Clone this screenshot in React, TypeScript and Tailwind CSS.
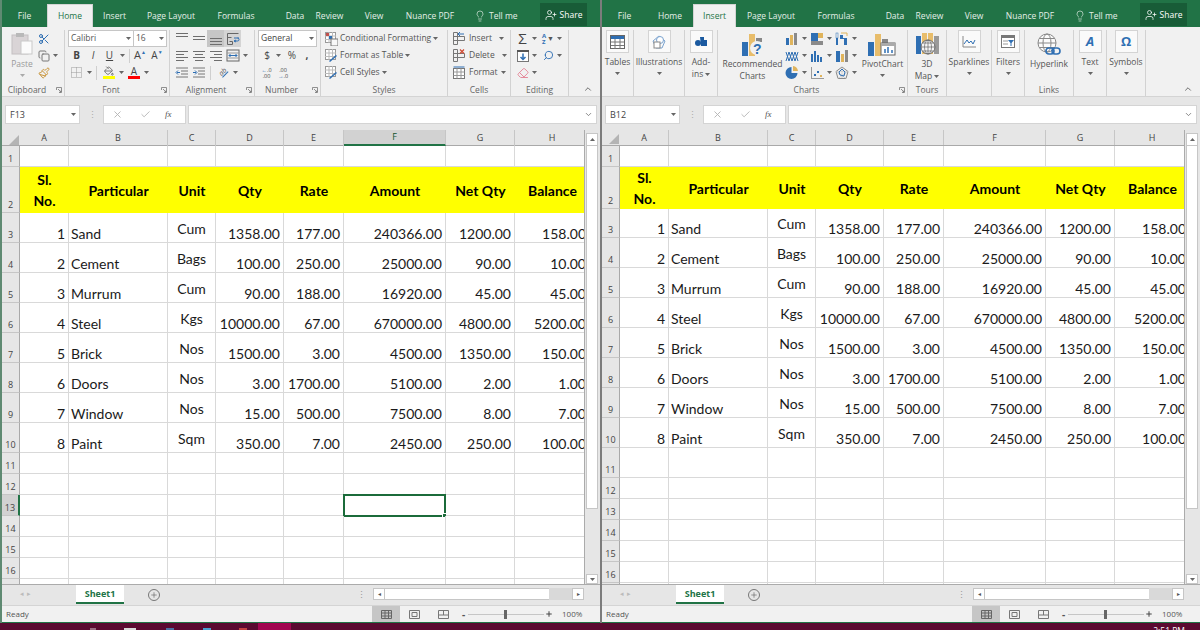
import { Copy, Eraser, PaintBucket, Paintbrush, Scissors, Search, ChevronUp, ChevronDown, Lightbulb, UserPlus, Plus, X, Check } from 'lucide-react';
import type { ReactNode } from 'react';

const COLS = 'grid-cols-[18px_49px_99px_48px_68px_60px_102px_69px_75px]';
const LETTERS = ['A', 'B', 'C', 'D', 'E', 'F', 'G', 'H'];
const HEADINGS = ['Particular', 'Unit', 'Qty', 'Rate', 'Amount', 'Net Qty', 'Balance'];
const ROWS = [
  ['1', 'Sand', 'Cum', '1358.00', '177.00', '240366.00', '1200.00', '158.00'],
  ['2', 'Cement', 'Bags', '100.00', '250.00', '25000.00', '90.00', '10.00'],
  ['3', 'Murrum', 'Cum', '90.00', '188.00', '16920.00', '45.00', '45.00'],
  ['4', 'Steel', 'Kgs', '10000.00', '67.00', '670000.00', '4800.00', '5200.00'],
  ['5', 'Brick', 'Nos', '1500.00', '3.00', '4500.00', '1350.00', '150.00'],
  ['6', 'Doors', 'Nos', '3.00', '1700.00', '5100.00', '2.00', '1.00'],
  ['7', 'Window', 'Nos', '15.00', '500.00', '7500.00', '8.00', '7.00'],
  ['8', 'Paint', 'Sqm', '350.00', '7.00', '2450.00', '250.00', '100.00'],
];

function Chev() {
  return (
    <svg width="5" height="3" viewBox="0 0 5 3" className="shrink-0">
      <path d="M0 0h5L2.5 3z" fill="#666" />
    </svg>
  );
}

function Launcher() {
  return (
    <svg width="6" height="6" viewBox="0 0 6 6" className="absolute right-[2px] top-[3px]">
      <path d="M.5 3V.5H5.500V5.500H3M2 2l3 3M3.500 5H5V3.500" fill="none" stroke="#777" strokeWidth="0.8" />
    </svg>
  );
}

function Group({ w, label, launcher, children }: { w: string; label?: string; launcher?: boolean; children: ReactNode }) {
  return (
    <div className={`${w} shrink-0 flex flex-col border-r border-[#d2d2d2]`}>
      <div className="h-[54px]">{children}</div>
      <div className={`relative h-[12px] leading-[12px] text-center text-[#666] ${launcher ? 'pr-[12px]' : ''}`}>
        {label}
        {launcher && <Launcher />}
      </div>
    </div>
  );
}

function Row({ className = '', children }: { className?: string; children: ReactNode }) {
  return <div className={`flex items-center h-[17px] ${className}`}>{children}</div>;
}

function Slot({ w, children, className = '' }: { w: string; children?: ReactNode; className?: string }) {
  return <div className={`${w} shrink-0 flex items-center justify-center ${className}`}>{children}</div>;
}

function Sep() {
  return <div className="w-px h-[14px] bg-[#cfcfcf]" />;
}

function Lines({ type }: { type: string }) {
  const sets: Record<string, number[][]> = {
    top: [[1, 2, 12], [1, 5, 12]],
    mid: [[1, 5, 12], [1, 8, 12]],
    bot: [[1, 7, 12], [1, 10, 12], [1, 13, 12]],
    left: [[1, 3, 12], [1, 6, 8], [1, 9, 12], [1, 12, 8]],
    center: [[1, 3, 12], [3, 6, 8], [1, 9, 12], [3, 12, 8]],
    right: [[1, 3, 12], [5, 6, 8], [1, 9, 12], [5, 12, 8]],
  };
  return (
    <svg width="14" height="15" viewBox="0 0 14 15">
      {sets[type].map((l, i) => (
        <rect key={i} x={l[0]} y={l[1]} width={l[2]} height="1" fill="#6e6e6e" />
      ))}
    </svg>
  );
}

function PasteIcon() {
  return (
    <svg width="22" height="23" viewBox="0 0 22 23">
      <rect x="1" y="3" width="16" height="19" fill="#d9d4d6" stroke="#c4c0c2" />
      <rect x="5" y="1" width="8" height="4" fill="#b9b9b9" />
      <rect x="10" y="9" width="11" height="13" fill="#fbfbfb" stroke="#c9c9c9" />
    </svg>
  );
}

function WrapIcon() {
  return (
    <svg width="14" height="14" viewBox="0 0 14 14">
      <path d="M1.500 1.500h11M1.500 1.500v11h5v-3h-3M1.500 5.500h4" fill="none" stroke="#666" />
      <path d="M8 6h5M8 9h3.500a1 1 0 0 0 0-3M10 8l-2 1 2 1" fill="none" stroke="#2f6fb3" />
    </svg>
  );
}

function MergeIcon() {
  return (
    <svg width="14" height="13" viewBox="0 0 14 13">
      <rect x="1" y="1" width="12" height="11" fill="none" stroke="#666" />
      <path d="M1 4h12M1 9h12" stroke="#999" />
      <path d="M3 6.500h8M4.500 5 3 6.500 4.500 8M9.500 5 11 6.500 9.500 8" fill="none" stroke="#2f6fb3" />
    </svg>
  );
}

function Indent({ flip }: { flip?: boolean }) {
  return (
    <svg width="14" height="12" viewBox="0 0 14 12">
      <path d="M1 1h12M6 4h7M6 7h7M1 10h12" stroke="#777" />
      <path d={flip ? 'M1 5.500h3M3 3.500l2 2-2 2' : 'M5 5.500H2M3 3.500l-2 2 2 2'} fill="none" stroke="#2f6fb3" />
    </svg>
  );
}

function StyleIcon({ kind }: { kind: number }) {
  return (
    <svg width="13" height="14" viewBox="0 0 13 14">
      <rect x="0.500" y="0.500" width="10" height="10" fill="#fff" stroke="#999" />
      <path d="M0 4h11M0 7.500h11M4 0v11M7.500 0v11" stroke="#bbb" />
      {kind === 0 && <rect x="1" y="1" width="3" height="3" fill="#c0504d" />}
      {kind === 0 && <rect x="4" y="4" width="3" height="3" fill="#2f6fb3" />}
      {kind === 0 && <rect x="6" y="7" width="7" height="7" fill="#f8f8f8" stroke="#777" />}
      {kind > 0 && <path d="M5 13l7-6-1-1-7 6z" fill="#2f6fb3" />}
    </svg>
  );
}

function CellIcon({ kind }: { kind: number }) {
  return (
    <svg width="13" height="13" viewBox="0 0 13 13">
      {kind < 2 ? (
        <>
          <path d="M.500.500h4v12h-4zM.500 4.500h4M.500 8.500h4M4.500 4.500h7v4h-7" fill="none" stroke="#777" />
          {kind === 0 ? <path d="M11 2H5M7 0 5 2l2 2" fill="none" stroke="#2f6fb3" /> : <path d="M7 .500l4 4M11 .500l-4 4" stroke="#d04a32" strokeWidth="1.200" />}
        </>
      ) : (
        <>
          <rect x="0.500" y="2.500" width="11" height="10" fill="#fff" stroke="#777" />
          <rect x="0.500" y="0.500" width="11" height="1" fill="#2f6fb3" />
          <path d="M4 2.500v10M8 2.500v10M.500 6h11M.500 9.500h11" stroke="#999" />
        </>
      )}
    </svg>
  );
}

function HomeRibbon() {
  return (
    <>
      <Group w="w-[63px]" label="Clipboard" launcher>
        <div className="flex">
          <div className="w-[35px] flex flex-col items-center text-[#9a9a9a] pl-[5px]">
            <div className="mt-[2px]"><PasteIcon /></div>
            <div className="leading-[11px] mt-[3px]">Paste</div>
            <div className="mt-[5px] opacity-50"><Chev /></div>
          </div>
          <div className="flex flex-col pl-[1px]">
            <Row><Scissors size={12} color="#2f6fb3" /></Row>
            <Row className="gap-[3px]"><Copy size={12} color="#777" /><Chev /></Row>
            <Row><Paintbrush size={12} color="#c9953a" /></Row>
          </div>
        </div>
      </Group>
      <Group w="w-[105px]" label="Font" launcher>
        <div className="pl-[3px]">
          <Row>
            <div className="w-[66px] h-[17px] bg-white border border-[#c6c6c6] flex items-center justify-between px-[2px]">Calibri<Chev /></div>
            <div className="w-[33px] h-[17px] bg-white border border-l-0 border-[#c6c6c6] flex items-center justify-between px-[2px]">16<Chev /></div>
          </Row>
          <Row className="text-[10px] text-[#444]">
            <Slot w="w-[17px]" className="font-bold">B</Slot>
            <Slot w="w-[16px]" className="italic">I</Slot>
            <Slot w="w-[17px]" className="underline">U</Slot>
            <Slot w="w-[9px]"><Chev /></Slot>
            <Slot w="w-[4px]"><Sep /></Slot>
            <Slot w="w-[18px]" className="text-[11px]">A<span className="text-[#2f6fb3] text-[5px] -mt-[6px]">▲</span></Slot>
            <Slot w="w-[16px]">A<span className="text-[#2f6fb3] text-[5px] -mt-[6px]">▼</span></Slot>
          </Row>
          <Row>
            <Slot w="w-[17px]">
              <svg width="11" height="11" viewBox="0 0 11 11"><path d="M.500.500h10v10H.500zM5.500.500v10M.500 5.500h10" fill="none" stroke="#999" strokeDasharray="1 1" /></svg>
            </Slot>
            <Slot w="w-[8px]"><Chev /></Slot>
            <Slot w="w-[7px]"><Sep /></Slot>
            <Slot w="w-[18px]" className="flex-col">
              <PaintBucket size={10} color="#666" />
              <div className="w-[12px] h-[3px] bg-[#ffff00]" />
            </Slot>
            <Slot w="w-[7px]"><Chev /></Slot>
            <Slot w="w-[18px]" className="flex-col leading-[10px] text-[#444] text-[10px]">
              A
              <div className="w-[12px] h-[3px] bg-[#ff0000]" />
            </Slot>
            <Slot w="w-[7px]"><Chev /></Slot>
          </Row>
        </div>
      </Group>
      <Group w="w-[85px]" label="Alignment" launcher>
        <div className="pl-[3px]">
          <Row>
            <Slot w="w-[17px]"><Lines type="top" /></Slot>
            <Slot w="w-[17px]"><Lines type="mid" /></Slot>
            <Slot w="w-[17px] h-[17px] bg-[#c6c6c6]"><Lines type="bot" /></Slot>
            <Slot w="w-[17px] h-[17px] bg-[#d4d4d4]"><WrapIcon /></Slot>
          </Row>
          <Row>
            <Slot w="w-[17px]"><Lines type="left" /></Slot>
            <Slot w="w-[17px]"><Lines type="center" /></Slot>
            <Slot w="w-[17px]"><Lines type="right" /></Slot>
            <Slot w="w-[17px]"><MergeIcon /></Slot>
            <Slot w="w-[9px]"><Chev /></Slot>
          </Row>
          <Row>
            <Slot w="w-[17px]"><Indent /></Slot>
            <Slot w="w-[17px]"><Indent flip /></Slot>
            <Slot w="w-[6px]"><Sep /></Slot>
            <Slot w="w-[20px] text-[7px] text-[#555] italic">
              <span className="-rotate-45 underline decoration-[#2f6fb3]">ab</span>
            </Slot>
            <Slot w="w-[5px]"><Chev /></Slot>
          </Row>
        </div>
      </Group>
      <Group w="w-[66px]" label="Number" launcher>
        <div className="pl-[3px] text-[#444]">
          <Row>
            <div className="w-[59px] h-[17px] bg-white border border-[#c6c6c6] flex items-center justify-between px-[2px]">General<Chev /></div>
          </Row>
          <Row className="text-[10px]">
            <Slot w="w-[18px]">$</Slot>
            <Slot w="w-[5px]"><Chev /></Slot>
            <Slot w="w-[16px] ml-[3px]">%</Slot>
            <Slot w="w-[14px] font-bold">,</Slot>
          </Row>
          <Row className="text-[5.500px] leading-[6px]">
            <Slot w="w-[17px]"><div className="text-center"><span className="text-[#2f6fb3]">←</span>.0<br />.00</div></Slot>
            <Slot w="w-[16px]"><div className="text-center">.00<br /><span className="text-[#2f6fb3]">→</span>.0</div></Slot>
          </Row>
        </div>
      </Group>
      <Group w="w-[127px]" label="Styles">
        <div className="pl-[4px]">
          <Row className="gap-[2px]"><StyleIcon kind={0} />Conditional Formatting<Chev /></Row>
          <Row className="gap-[2px]"><StyleIcon kind={1} />Format as Table<Chev /></Row>
          <Row className="gap-[2px]"><StyleIcon kind={2} />Cell Styles<Chev /></Row>
        </div>
      </Group>
      <Group w="w-[63px]" label="Cells">
        <div className="pl-[5px]">
          <Row className="gap-[3px]"><CellIcon kind={0} /><span className="w-[27px]">Insert</span><Chev /></Row>
          <Row className="gap-[3px]"><CellIcon kind={1} /><span className="w-[30px]">Delete</span><Chev /></Row>
          <Row className="gap-[3px]"><CellIcon kind={2} /><span className="w-[29px]">Format</span><Chev /></Row>
        </div>
      </Group>
      <Group w="w-[58px]" label="Editing">
        <div className="pl-[3px]">
          <Row>
            <Slot w="w-[17px] text-[15px] text-[#444]">Σ</Slot>
            <Slot w="w-[6px]"><Chev /></Slot>
            <Slot w="w-[18px] ml-[2px] text-[6px] leading-[6px] font-bold text-[#2f6fb3]"><span>A<br />Z</span><span className="text-[#555] text-[7px] ml-px">▼</span></Slot>
            <Slot w="w-[5px]"><Chev /></Slot>
          </Row>
          <Row>
            <Slot w="w-[17px]">
              <svg width="12" height="12" viewBox="0 0 12 12"><rect x=".5" y=".5" width="11" height="11" fill="#fff" stroke="#777" /><rect x="0" y="0" width="12" height="2" fill="#555" /><path d="M6 3.500v6M3.500 7 6 9.500 8.500 7" fill="none" stroke="#2f6fb3" strokeWidth="1.500" /></svg>
            </Slot>
            <Slot w="w-[6px]"><Chev /></Slot>
            <Slot w="w-[18px] ml-[2px]"><Search size={11} color="#2f6fb3" className="-scale-x-100" /></Slot>
            <Slot w="w-[5px]"><Chev /></Slot>
          </Row>
          <Row>
            <Slot w="w-[17px]"><Eraser size={12} color="#e58a9b" /></Slot>
            <Slot w="w-[6px]"><Chev /></Slot>
          </Row>
        </div>
      </Group>
    </>
  );
}

function BoxBtn({ children }: { children: ReactNode }) {
  return <div className="w-[23px] h-[23px] bg-[#fafafa] border border-[#d4d4d4] flex items-center justify-center">{children}</div>;
}

function BoxGroup({ w, name, children }: { w: string; name: string; children: ReactNode }) {
  return (
    <Group w={w}>
      <div className="flex flex-col items-center h-full">
        <BoxBtn>{children}</BoxBtn>
        <div className="mt-[3px] leading-[12px]">{name}</div>
        <div className="mt-[4px]"><Chev /></div>
      </div>
    </Group>
  );
}

function SmallChart({ kind }: { kind: number }) {
  const blue = '#2f6fb3';
  const gold = '#e0b45c';
  const grey = '#8a8a8a';
  const shapes: ReactNode[] = [
    <><rect x="1" y="6" width="3" height="7" fill={blue} /><rect x="5" y="3" width="3" height="10" fill={gold} /><rect x="9" y="1" width="3" height="12" fill={grey} /></>,
    <><path d="M1 12 4 3l3 9 3-9 3 9M1 3l3 9 3-9 3 9 3-9" fill="none" stroke={blue} /></>,
    <><path d="M6.500 1v6h6A6 6 0 1 1 6.500 1z" fill={blue} /><path d="M8 0a6 6 0 0 1 5 5H8z" fill={gold} /></>,
    <><rect x="1" y="1" width="7" height="8" fill={blue} /><rect x="8" y="1" width="5" height="5" fill={gold} /><rect x="1" y="9" width="12" height="4" fill={grey} /></>,
    <><rect x="1" y="5" width="2" height="8" fill={blue} /><rect x="4" y="2" width="2" height="11" fill={blue} /><rect x="7" y="6" width="2" height="7" fill={blue} /><rect x="10" y="8" width="2" height="5" fill={blue} /></>,
    <><path d="M1 13V1h1v11h12v1z" fill="#999" /><rect x="4" y="8" width="2" height="2" fill={blue} /><rect x="7" y="5" width="2" height="2" fill={blue} /><rect x="10" y="9" width="2" height="2" fill={gold} /></>,
    <><rect x="1" y="6" width="2" height="7" fill={blue} /><rect x="1" y="1" width="2" height="5" fill="none" stroke={blue} strokeWidth=".5" /><path d="M5 3h3v3h4v7H9V7H5z" fill={blue} /><path d="M6 1h6v3" fill="none" stroke={gold} /></>,
    <><rect x="1" y="2" width="4" height="11" fill={blue} /><rect x="6" y="5" width="3" height="8" fill={gold} /><rect x="10" y="1" width="3" height="12" fill={grey} /></>,
    <><path d="M7 1l6 4.500-2 7H3l-2-7z" fill="none" stroke={grey} /><path d="M7 1v11M1 5.500l12 0M3 12.500 13 5.500M11 12.500 1 5.500" stroke="#bbb" strokeWidth=".5" /><path d="M7 3l3 3-1 4-4-1-1-3z" fill="none" stroke={blue} /></>,
  ];
  return <svg width="14" height="14" viewBox="0 0 14 14">{shapes[kind]}</svg>;
}

function InsertRibbon() {
  return (
    <>
      <BoxGroup w="w-[32px]" name="Tables">
        <svg width="15" height="14" viewBox="0 0 15 14"><rect x=".5" y=".5" width="14" height="13" fill="#fff" stroke="#666" /><rect x="1" y="1" width="13" height="3" fill="#2f6fb3" /><path d="M5 4v10M10 4v10M1 7h13M1 10.500h13" stroke="#777" /></svg>
      </BoxGroup>
      <BoxGroup w="w-[51px]" name="Illustrations">
        <svg width="14" height="14" viewBox="0 0 14 14"><path d="M7 1l6 5-3 7H4L1 6z" fill="none" stroke="#7aa3cf" /><circle cx="8" cy="5" r="3.500" fill="#fff" stroke="#7aa3cf" /><rect x="2" y="7" width="6" height="6" fill="#fff" stroke="#888" /></svg>
      </BoxGroup>
      <Group w="w-[33px]">
        <div className="flex flex-col items-center h-full">
          <BoxBtn>
            <svg width="13" height="12" viewBox="0 0 13 12"><circle cx="3" cy="7" r="3" fill="#1b5aa0" /><path d="M5 1h4v3h3v6H6z" fill="#1b5aa0" /></svg>
          </BoxBtn>
          <div className="mt-[3px] leading-[12px]">Add-</div>
          <div className="flex items-center gap-[2px] leading-[12px]">ins<Chev /></div>
        </div>
      </Group>
      <Group w="w-[190px]" label="Charts" launcher>
        <div className="flex pl-[2px]">
          <div className="w-[65px] flex flex-col items-center">
            <svg width="22" height="23" viewBox="0 0 22 23" className="mt-[3px]">
              <rect x="0" y="9" width="6" height="14" fill="#2f6fb3" />
              <rect x="7" y="1" width="6" height="22" fill="#e8bd6b" />
              <rect x="14" y="5" width="6" height="4" fill="#888" />
              <circle cx="15" cy="15" r="7" fill="#f1f1f1" />
              <text x="11" y="21" fontSize="14" fontWeight="700" fill="#2f6fb3" fontFamily="'Liberation Sans'">?</text>
            </svg>
            <div className="mt-[2px] leading-[12px] whitespace-nowrap">Recommended</div>
            <div className="leading-[12px]">Charts</div>
          </div>
          <div className="grid grid-cols-[25px_25px_25px] auto-rows-[17px]">
            {[0, 3, 6, 1, 4, 7, 2, 5, 8].map((k) => (
              <Row key={k} className="gap-[3px]"><SmallChart kind={k} /><Chev /></Row>
            ))}
          </div>
          <div className="w-[45px] flex flex-col items-center">
            <svg width="29" height="23" viewBox="0 0 29 23" className="mt-[3px]">
              <rect x="0" y="9" width="6" height="14" fill="#2f6fb3" />
              <rect x="7" y="1" width="6" height="22" fill="#e8bd6b" />
              <rect x="14" y="6" width="6" height="4" fill="#888" />
              <rect x="13" y="10" width="14" height="12" fill="#fff" stroke="#666" />
              <rect x="13" y="10" width="14" height="3" fill="#aaa" />
              <path d="M17 20v-4M20 20v-6M24 20v-3" stroke="#2f6fb3" strokeWidth="1.500" />
            </svg>
            <div className="mt-[2px] leading-[12px]">PivotChart</div>
            <div className="mt-[4px]"><Chev /></div>
          </div>
        </div>
      </Group>
      <Group w="w-[39px]" label="Tours">
        <div className="flex flex-col items-center">
          <svg width="23" height="23" viewBox="0 0 23 23" className="mt-[3px]">
            <rect x="0" y="3" width="5" height="18" fill="#2f6fb3" />
            <rect x="6" y="0" width="5" height="21" fill="#e8bd6b" />
            <rect x="12" y="0" width="5" height="21" fill="#e8bd6b" />
            <rect x="18" y="3" width="5" height="18" fill="#9a9a9a" />
            <circle cx="12" cy="14" r="7" fill="#f5f5f5" stroke="#666" />
            <path d="M5 14h14M12 7v14M7 10h10M7 18h10" stroke="#666" strokeWidth=".7" />
            <ellipse cx="12" cy="14" rx="3.500" ry="7" fill="none" stroke="#666" strokeWidth=".7" />
          </svg>
          <div className="mt-[2px] leading-[12px]">3D</div>
          <div className="flex items-center gap-[2px] leading-[12px]">Map<Chev /></div>
        </div>
      </Group>
      <BoxGroup w="w-[45px]" name="Sparklines">
        <svg width="14" height="12" viewBox="0 0 14 12"><path d="M1 0v11h13" fill="none" stroke="#888" /><path d="M2 8l3-4 2 3 2-2 2 3 2-4" fill="none" stroke="#2f6fb3" /></svg>
      </BoxGroup>
      <BoxGroup w="w-[33px]" name="Filters">
        <svg width="14" height="13" viewBox="0 0 14 13"><rect x=".5" y=".5" width="13" height="12" fill="#fff" stroke="#777" /><rect x="1" y="1" width="12" height="2" fill="#777" /><path d="M2 6h5M2 9h5" stroke="#999" /><path d="M7 5h6l-2.500 3v3h-1V8z" fill="#2f6fb3" /></svg>
      </BoxGroup>
      <Group w="w-[49px]" label="Links">
        <div className="flex flex-col items-center">
          <svg width="24" height="23" viewBox="0 0 24 23" className="mt-[3px]">
            <circle cx="10" cy="10" r="9" fill="#fbfbfb" stroke="#888" />
            <ellipse cx="10" cy="10" rx="4" ry="9" fill="none" stroke="#888" />
            <path d="M1 10h18M2.500 5.500h15M2.500 14.500h15" stroke="#888" />
            <rect x="9" y="15" width="8" height="6" rx="3" fill="none" stroke="#2f6fb3" strokeWidth="1.600" />
            <rect x="15" y="15" width="8" height="6" rx="3" fill="none" stroke="#2f6fb3" strokeWidth="1.600" />
          </svg>
          <div className="mt-[2px] leading-[12px]">Hyperlink</div>
        </div>
      </Group>
      <BoxGroup w="w-[33px]" name="Text">
        <span className="text-[13px] italic font-bold text-[#2f6fb3]">A</span>
      </BoxGroup>
      <BoxGroup w="w-[39px]" name="Symbols">
        <span className="text-[13px] font-bold text-[#2f6fb3]">Ω</span>
      </BoxGroup>
    </>
  );
}

function TabBar({ active }: { active: string }) {
  const tabs = [
    ['File', 'w-[45px]'],
    ['Home', 'w-[46px]'],
    ['Insert', 'w-[43px]'],
    ['Page Layout', 'w-[70px]'],
    ['Formulas', 'w-[60px]'],
    ['Data', 'w-[28px] ml-[15px]'],
    ['Review', 'w-[41px]'],
    ['View', 'w-[48px]'],
    ['Nuance PDF', 'w-[64px]'],
  ];
  return (
    <div className="h-[27px] shrink-0 bg-[#217346] flex items-end text-[8.500px] text-[#e4efe8]">
      {tabs.map(([name, w]) => (
        <div
          key={name}
          className={`${w} h-[23px] pt-[1px] flex items-center justify-center whitespace-nowrap ${name === active ? 'bg-[#f1f1f1] text-[#217346] border border-b-0 border-[#d4d4d4]' : ''}`}
        >
          {name}
        </div>
      ))}
      <div className="ml-[12px] h-[23px] pt-[1px] flex items-center gap-[3px]">
        <Lightbulb size={12} strokeWidth={1.300} />
        Tell me
      </div>
      <div className="ml-auto mr-[13px] w-[47px] h-[23px] mb-[1px] pt-[1px] bg-[#185c37] flex items-center justify-center gap-[3px] text-white">
        <UserPlus size={12} strokeWidth={1.500} />
        Share
      </div>
    </div>
  );
}

function FormulaBar({ name }: { name: string }) {
  return (
    <div className="h-[33px] shrink-0 bg-[#e6e6e6] flex items-start pt-[8px] pl-[3px] pr-[3px] text-[#444]">
      <div className="w-[75px] h-[19px] bg-white border border-[#d4d4d4] flex items-center justify-between pl-[4px] pr-[3px] text-[9px]">
        {name}
        <Chev />
      </div>
      <div className="w-[23px] h-[19px] flex items-center justify-center text-[#aaa] tracking-[-1px] text-[9px] leading-[19px]">⋮</div>
      <div className="w-[83px] h-[19px] bg-white border border-[#d4d4d4] flex items-center">
        <X size={11} color="#b5b5b5" className="ml-[8px]" />
        <Check size={11} color="#b5b5b5" className="ml-[17px]" />
        <span className="ml-[14px] font-['Liberation_Serif'] italic text-[9px] text-[#555]">fx</span>
      </div>
      <div className="flex-1 ml-[2px] h-[19px] bg-white border border-[#d4d4d4] flex items-center justify-end pr-[3px]">
        <ChevronDown size={9} color="#666" />
      </div>
    </div>
  );
}

function Sheet({ rowHeights, selected }: { rowHeights: string[]; selected: boolean }) {
  return (
    <div className="h-[454px] shrink-0 flex">
      <div className="w-[582px] overflow-hidden bg-white">
        <div className={`grid ${COLS} h-[16px] w-[588px] bg-[#e6e6e6] text-[9px] text-[#444] border-b border-[#a9a9a9]`}>
          <div className="flex items-end justify-end pr-[1px] pb-[1px]">
            <svg width="10" height="10" viewBox="0 0 10 10"><path d="M10 0v10H0z" fill="#b4b4b4" /></svg>
          </div>
          {LETTERS.map((l) => (
            <div
              key={l}
              className={`flex items-center justify-center border-r border-[#c6c6c6] ${selected && l === 'F' ? 'bg-[#d2d2d2] border-b-2 border-b-[#217346] text-[#14532d]' : ''}`}
            >
              {l}
            </div>
          ))}
        </div>
        {rowHeights.map((h, i) => {
          const n = i + 1;
          const data = n >= 3 && n <= 10 ? ROWS[n - 3] : null;
          const hot = selected && n === 13;
          const head = n === 2;
          return (
            <div key={n} className={`grid ${COLS} ${h} w-[588px] font-[Lato] text-[14px] leading-[17px] text-[#1a1a1a]`}>
              <div
                className={`font-['Open_Sans'] text-[9px] leading-[13px] text-[#444] flex items-end justify-center pb-[1px] border-b border-[#c6c6c6] ${hot ? 'bg-[#d2d2d2] border-r-2 border-r-[#217346]' : 'bg-[#e6e6e6] border-r border-r-[#a9a9a9]'}`}
              >
                {n}
              </div>
              {head ? (
                <>
                  <div className="bg-[#ffff00] font-bold text-center flex items-center justify-center leading-[21px] text-black">Sl.<br />No.</div>
                  {HEADINGS.map((t) => (
                    <div key={t} className="bg-[#ffff00] font-bold flex items-center justify-center text-black whitespace-nowrap">{t}</div>
                  ))}
                </>
              ) : (
                LETTERS.map((l, c) => (
                  <div
                    key={l}
                    className={`relative flex whitespace-nowrap border-r border-b border-[#d9d9d9] ${c === 1 ? 'justify-start items-end pl-[2px]' : c === 2 ? 'justify-center items-end pb-[5px]' : 'justify-end items-end pr-[3px]'}`}
                  >
                    {data ? data[c] : ''}
                    {hot && l === 'F' && (
                      <div className="absolute -left-px -top-px w-[103px] h-[23px] border-2 border-[#1b6b3a]">
                        <div className="absolute -right-[3px] -bottom-[3px] w-[5px] h-[5px] bg-[#1b6b3a] border border-white" />
                      </div>
                    )}
                  </div>
                ))
              )}
            </div>
          );
        })}
      </div>
      <div className="flex-1 bg-[#e6e6e6] border-l border-[#ababab] pl-[1px] pr-[2px] pt-[3px] flex flex-col">
        <div className="h-[13px] bg-white border border-[#c6c6c6] flex items-center justify-center"><svg width="5" height="3" viewBox="0 0 5 3"><path d="M0 3h5L2.500 0z" fill="#666" /></svg></div>
        <div className="h-[363px] bg-white border border-[#c6c6c6] border-t-0" />
        <div className="flex-1" />
        <div className="h-[10px] bg-white border border-[#c6c6c6] flex items-center justify-center"><Chev /></div>
      </div>
    </div>
  );
}

function SheetBar() {
  return (
    <div className="h-[21px] shrink-0 bg-[#e6e6e6] border-t border-[#ababab] flex items-start text-[#bbb] text-[7px]">
      <div className="w-[47px] h-[19px] flex items-center justify-between px-[18px]"><span>◂</span><span>▸</span></div>
      <div className="ml-[27px] w-[48px] h-[19px] bg-white border-b-2 border-[#217346] flex items-center justify-center font-bold text-[9px] text-[#217346]">Sheet1</div>
      <div className="ml-[24px] h-[19px] flex items-center">
        <div className="w-[12px] h-[12px] rounded-full border border-[#777] flex items-center justify-center"><Plus size={8} color="#666" /></div>
      </div>
      <div className="ml-[197px] h-[19px] flex items-center text-[9px] text-[#999]">⋮</div>
      <div className="ml-[7px] mt-[3px] flex h-[12px] w-[211px]">
        <div className="w-[12px] bg-white border border-[#c6c6c6] flex items-center justify-center text-[#555] text-[6px]">◂</div>
        <div className="w-[164px] bg-white border-y border-[#c6c6c6]" />
        <div className="flex-1 bg-[#d9d9d9]" />
        <div className="w-[12px] bg-white border border-[#c6c6c6] flex items-center justify-center text-[#555] text-[6px]">▸</div>
      </div>
    </div>
  );
}

function StatusBar() {
  return (
    <div className="h-[17px] shrink-0 bg-[#f1f1f1] flex items-center text-[#555] text-[8px] border-t border-[#d4d4d4]">
      <span className="ml-[4px] w-[366px]">Ready</span>
      <div className="w-[28px] h-[16px] bg-[#c6c6c6] flex items-center justify-center">
        <svg width="11" height="9" viewBox="0 0 11 9"><path d="M.5.500h10v8H.500zM4 .500v8M7.500.500v8M.500 3h10M.500 6h10" fill="none" stroke="#666" /></svg>
      </div>
      <div className="w-[29px] flex justify-center">
        <svg width="11" height="9" viewBox="0 0 11 9"><path d="M.500.500h10v8H.500zM3 2.500h5v4H3z" fill="none" stroke="#777" /></svg>
      </div>
      <div className="w-[29px] flex justify-center">
        <svg width="11" height="9" viewBox="0 0 11 9"><path d="M.500.500h10v8H.500zM.500 5h10M5.500.500V5" fill="none" stroke="#777" /></svg>
      </div>
      <span className="ml-[4px] w-[6px] text-[10px] font-bold leading-[10px]">-</span>
      <div className="relative w-[76px] h-px bg-[#c6c6c6]">
        <div className="absolute left-[36px] -top-[4px] w-[3px] h-[9px] bg-[#666]" />
      </div>
      <Plus size={8} color="#444" strokeWidth={3} className="ml-[1px]" />
      <span className="ml-[9px]">100%</span>
    </div>
  );
}

function Window({ left, active, name, rowHeights }: { left: boolean; active: string; name: string; rowHeights: string[] }) {
  return (
    <div className={`w-[600px] h-[623px] flex flex-col border-l-2 font-['Open_Sans'] text-[8.500px] text-[#555] ${left ? 'border-[#5f8a72]' : 'border-[#7c7c7c]'}`}>
      <TabBar active={active} />
      <div className="h-[70px] shrink-0 bg-[#f1f1f1] border-b border-[#d4d4d4] pt-[3px] flex">
        {left ? <HomeRibbon /> : <InsertRibbon />}
        <div className="flex-1 flex items-end justify-end pr-[7px] pb-[2px]">
          <ChevronUp size={10} color="#555" strokeWidth={2} />
        </div>
      </div>
      <FormulaBar name={name} />
      <Sheet rowHeights={rowHeights} selected={left} />
      <SheetBar />
      <StatusBar />
      <div className="h-px shrink-0 bg-[#217346]" />
    </div>
  );
}

const LEFT_ROWS = ['h-[21px]', 'h-[46px]', 'h-[30px]', 'h-[30px]', 'h-[30px]', 'h-[30px]', 'h-[30px]', 'h-[30px]', 'h-[30px]', 'h-[30px]', 'h-[21px]', 'h-[21px]', 'h-[21px]', 'h-[21px]', 'h-[21px]', 'h-[21px]', 'h-[21px]'];
const RIGHT_ROWS = ['h-[21px]', 'h-[42px]', 'h-[29px]', 'h-[30px]', 'h-[30px]', 'h-[30px]', 'h-[30px]', 'h-[30px]', 'h-[30px]', 'h-[30px]', 'h-[30px]', 'h-[21px]', 'h-[21px]', 'h-[21px]', 'h-[21px]', 'h-[21px]', 'h-[21px]'];

export default function App() {
  return (
    <div className="w-[1200px] h-[630px] overflow-hidden flex flex-col bg-[#5a0a30]">
      <div className="flex h-[623px] shrink-0">
        <Window left active="Home" name="F13" rowHeights={LEFT_ROWS} />
        <Window left={false} active="Insert" name="B12" rowHeights={RIGHT_ROWS} />
      </div>
      <div className="h-[7px] flex items-end overflow-hidden">
        <div className="ml-[90px] w-[6px] h-[2px] bg-[#9a6a80]" />
        <div className="ml-[28px] w-[12px] h-[2px] bg-[#d8d8d8]" />
        <div className="ml-[30px] w-[8px] h-[2px] bg-[#4a6fa0]" />
        <div className="ml-[29px] w-[8px] h-[2px] bg-[#4aa0d0]" />
        <div className="ml-[28px] w-[8px] h-[2px] bg-[#c04040]" />
        <div className="ml-[11px] w-[33px] h-[7px] bg-[#a0064f]" />
        <div className="ml-auto mr-[15px] h-[7px] pt-[3px] font-['Open_Sans'] text-[8.500px] leading-[10px] text-white">2:51 PM</div>
      </div>
    </div>
  );
}
